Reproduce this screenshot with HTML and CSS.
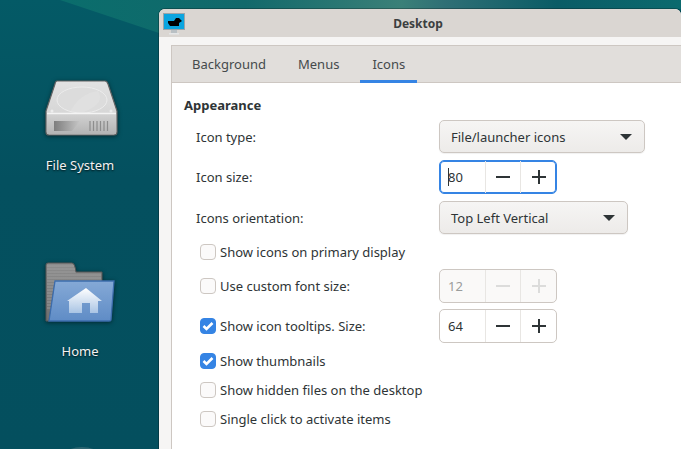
FILE: index.html
```html
<!DOCTYPE html>
<html>
  <head>
    <title>Desktop</title>
    <link rel="stylesheet" href="styles.css">
  </head>
  <body>
    <div class="desktop">
      <svg class="wallpaper" width="681" height="449" viewBox="0 0 681 449">
        <defs>
          <linearGradient id="band" x1="60" y1="0" x2="681" y2="0" gradientUnits="userSpaceOnUse">
            <stop offset="0" stop-color="#0a6d6c" />
            <stop offset="0.3" stop-color="#12696b" />
            <stop offset="0.55" stop-color="#3a8078" />
            <stop offset="0.62" stop-color="#2f6f75" />
            <stop offset="0.8" stop-color="#0a5c66" />
            <stop offset="1" stop-color="#0b6a6e" />
          </linearGradient>
        </defs>
        <polygon points="60,0 681,0 681,9 159,33" fill="url(#band)" />
        <ellipse cx="82" cy="456" rx="18" ry="9" fill="#2d6672" />
      </svg>

      <div class="desk-icon icon-fs">
        <svg width="76" height="60" viewBox="0 0 76 60">
          <defs>
            <linearGradient id="disk-top" x1="0" y1="0" x2="0" y2="1">
              <stop offset="0" stop-color="#e2e2e2" />
              <stop offset="1" stop-color="#cfcfcf" />
            </linearGradient>
            <linearGradient id="disk-front" x1="0" y1="0" x2="0" y2="1">
              <stop offset="0" stop-color="#d2d2d2" />
              <stop offset="1" stop-color="#b4b4b4" />
            </linearGradient>
            <linearGradient id="disk-slot" x1="0" y1="0" x2="1" y2="0">
              <stop offset="0" stop-color="#7d7d7d" />
              <stop offset="1" stop-color="#c6c6c6" />
            </linearGradient>
          </defs>
          <path d="M15 2 H63 Q65 2 66 5 L75 32 V53 Q75 56 72 56 H7 Q4 56 4 53 V32 L13 5 Q13.500 2 15 2 Z" fill="url(#disk-top)" stroke="#626363" stroke-width="1.200" />
          <ellipse cx="40" cy="21" rx="25" ry="13" fill="#dcdcdc" stroke="#ececec" />
          <path d="M28 33 Q38 14 56 12 Q64 24 42 33 Z" fill="#e6e6e6" opacity="0.4" />
          <circle cx="10" cy="32" r="1.500" fill="#ededed" />
          <circle cx="69" cy="32" r="1.500" fill="#ededed" />
          <rect x="5" y="35" width="69" height="20" fill="url(#disk-front)" />
          <path d="M5 34.500 H74" stroke="#f4f4f4" stroke-width="1.500" />
          <path d="M12 42 H38 L30 52 H12 Z" fill="url(#disk-slot)" />
          <path d="M48 42 V52 M51.500 42 V52 M55 42 V52 M58.500 42 V52 M62 42 V52 M65.500 42 V52" stroke="#8d8d8d" stroke-width="1.200" />
        </svg>
        <span>File System</span>
      </div>

      <div class="desk-icon icon-home">
        <svg width="76" height="62" viewBox="0 0 76 62">
          <defs>
            <linearGradient id="folder-back" x1="0" y1="0" x2="0" y2="1">
              <stop offset="0" stop-color="#8d8d8d" />
              <stop offset="1" stop-color="#6f6f6f" />
            </linearGradient>
            <linearGradient id="folder-front" x1="0" y1="0" x2="0" y2="1">
              <stop offset="0" stop-color="#85a9d6" />
              <stop offset="1" stop-color="#5f8cc6" />
            </linearGradient>
            <linearGradient id="house" x1="0" y1="0" x2="0" y2="1">
              <stop offset="0" stop-color="#ffffff" />
              <stop offset="1" stop-color="#a9c4e4" />
            </linearGradient>
          </defs>
          <path d="M4 3 Q4 1 6 1 H30 Q32 1 33 5 L34 10 H60 V20 H13 L7 59 H4 Z" fill="url(#folder-back)" stroke="#575757" />
          <path d="M5 4 H32 M5 7 H33 M5 10 H33 M5 13 H59 M5 16 H59 M5 19 H59 M5 22 H12 M5 25 H11.500 M5 28 H11 M5 31 H10.500 M5 34 H10 M5 37 H10 M5 40 H9.500 M5 43 H9 M5 46 H9" stroke="#a2a2a2" stroke-width="0.800" />
          <path d="M13 19 H72 L69 58 Q69 59 67 59 H7 Z" fill="url(#folder-front)" stroke="#3d6dad" stroke-width="1.300" />
          <path d="M44 26 L25 39 H27 V51 H40 V41 H48 V51 H56 V39 H60 Z" fill="url(#house)" />
        </svg>
        <span>Home</span>
      </div>

      <div class="window">
        <div class="titlebar">
          <svg class="app-icon" width="22" height="22" viewBox="0 0 22 22">
            <rect x="0.500" y="0.500" width="21" height="16" fill="#0aa5e0" stroke="#9aa4aa" />
            <path d="M5 8 L11 8 L13 5 L16 5 L19 8 L16 10 L16 13 L7 13 L5 10 Z" fill="#000" />
            <rect x="8" y="17" width="6" height="3" fill="#b9c0c4" />
            <rect x="6" y="20" width="10" height="1.500" fill="#e4e6e7" />
          </svg>
          <span class="title">Desktop</span>
        </div>
        <div class="body">
          <div class="notebook">
            <div class="tabs">
              <div class="tab">Background</div>
              <div class="tab">Menus</div>
              <div class="tab active">Icons</div>
            </div>
            <div class="page">
              <h4>Appearance</h4>

              <div class="row row-first">
                <label>Icon type:</label>
                <div class="combo combo-wide">File/launcher icons<i class="arrow"></i></div>
              </div>
              <div class="row">
                <label>Icon size:</label>
                <div class="spin focused">
                  <span class="value"><b class="caret"></b>80</span>
                  <span class="step"><i class="minus"></i></span>
                  <span class="step"><i class="plus"></i></span>
                </div>
              </div>
              <div class="row">
                <label>Icons orientation:</label>
                <div class="combo combo-mid">Top Left Vertical<i class="arrow"></i></div>
              </div>

              <div class="check-row check-first">
                <span class="box"></span>Show icons on primary display
              </div>
              <div class="row row-check">
                <div class="check-row"><span class="box"></span>Use custom font size:</div>
                <div class="spin disabled">
                  <span class="value">12</span>
                  <span class="step"><i class="minus"></i></span>
                  <span class="step"><i class="plus"></i></span>
                </div>
              </div>
              <div class="row row-check">
                <div class="check-row">
                  <span class="box checked"><svg width="12" height="10" viewBox="0 0 12 10"><path d="M1.500 5 L4.500 8 L10.500 2" fill="none" stroke="#fff" stroke-width="2.600" /></svg></span>Show icon tooltips. Size:
                </div>
                <div class="spin">
                  <span class="value">64</span>
                  <span class="step"><i class="minus"></i></span>
                  <span class="step"><i class="plus"></i></span>
                </div>
              </div>
              <div class="check-row">
                <span class="box checked"><svg width="12" height="10" viewBox="0 0 12 10"><path d="M1.500 5 L4.500 8 L10.500 2" fill="none" stroke="#fff" stroke-width="2.600" /></svg></span>Show thumbnails
              </div>
              <div class="check-row"><span class="box"></span>Show hidden files on the desktop</div>
              <div class="check-row"><span class="box"></span>Single click to activate items</div>
            </div>
          </div>
        </div>
      </div>
    </div>
  </body>
</html>
```

FILE: styles.css
```css
html, body {
  margin: 0;
  padding: 0;
  height: 449px;
  overflow: hidden;
}

.desktop {
  position: relative;
  width: 681px;
  height: 449px;
  overflow: hidden;
  background: linear-gradient(180deg, #045a66 0%, #04505f 40%, #044f5e 100%);
  font-family: "Noto Sans", sans-serif;
  font-size: 13px;
  color: #2e3436;
}

.wallpaper {
  position: absolute;
  left: 0;
  top: 0;
}

.desk-icon {
  position: absolute;
  left: 8px;
  width: 144px;
  display: flex;
  flex-direction: column;
  align-items: center;
  color: #f2f2f2;
  text-shadow: 0 1px 2px rgba(0, 0, 0, 0.8);
}

.desk-icon svg {
  filter: drop-shadow(0 1px 2px rgba(0, 0, 0, 0.5));
}

.icon-fs {
  top: 79px;
}

.icon-fs span {
  margin-top: 17px;
}

.icon-home {
  top: 262px;
}

.icon-home span {
  margin-top: 18px;
}

.window {
  position: absolute;
  left: 159px;
  top: 9px;
  width: 522px;
  height: 440px;
  background: #f6f5f4;
  border-radius: 6px 6px 0 0;
  box-shadow: 0 0 0 1px rgba(0, 0, 0, 0.25);
}

.titlebar {
  height: 28px;
  background: #dad6d2;
  border-radius: 6px 6px 0 0;
  display: flex;
  align-items: center;
  justify-content: center;
  position: relative;
  padding-right: 4px;
}

.app-icon {
  position: absolute;
  left: 4px;
  top: 4px;
}

.title {
  font-weight: 700;
  font-size: 12px;
  color: #3c3f40;
}

.body {
  padding: 8px 0 0 12px;
}

.notebook {
  border: 1px solid #cdc7c2;
  border-right: none;
  background: #fff;
  height: 420px;
}

.tabs {
  height: 36px;
  background: #e1dedb;
  border-bottom: 1px solid #cdc7c2;
  display: flex;
  padding-left: 8px;
  color: #454a4c;
}

.tab {
  padding: 0 12px;
  margin-right: 8px;
  line-height: 36px;
}

.tab.active {
  box-shadow: inset 0 -3px 0 #3584e4;
  height: 37px;
  margin-left: 1px;
}

.page {
  padding: 13px 0 0 12px;
}

h4 {
  margin: 0;
  font-size: 13px;
  font-weight: 700;
  line-height: 18px;
}

.row {
  display: flex;
  align-items: center;
  padding-left: 12px;
  margin-top: 7px;
}

.row label {
  width: 243px;
}

.row-first {
  margin-top: 6px;
}

.row-check {
  padding-left: 16px;
  margin-top: 6px;
}

.row-check .check-row {
  width: 239px;
  margin: 0;
  padding: 0;
}

.combo {
  box-sizing: border-box;
  height: 33px;
  padding: 0 12px 0 11px;
  display: flex;
  align-items: center;
  justify-content: space-between;
  border: 1px solid #cdc7c2;
  border-radius: 5px;
  background: linear-gradient(180deg, #f6f5f4, #edebe9);
  box-shadow: 0 1px 1px rgba(0, 0, 0, 0.06);
}

.combo-wide {
  width: 206px;
}

.combo-mid {
  width: 189px;
}

.arrow {
  width: 0;
  height: 0;
  border-left: 6px solid transparent;
  border-right: 6px solid transparent;
  border-top: 6px solid #2e3436;
}

.spin {
  box-sizing: border-box;
  width: 118px;
  height: 34px;
  display: flex;
  border: 1px solid #cdc7c2;
  border-radius: 5px;
  background: #fff;
}

.spin.focused {
  border-color: #3584e4;
  box-shadow: inset 0 0 0 1px #3584e4;
}

.value {
  flex: 1;
  display: flex;
  align-items: center;
  padding-left: 8px;
  position: relative;
}

.caret {
  position: absolute;
  left: 8px;
  top: 7px;
  width: 1px;
  height: 18px;
  background: #2e3436;
}

.step {
  width: 34px;
  border-left: 1px solid #e8e6e3;
  display: flex;
  align-items: center;
  justify-content: center;
  position: relative;
}

.step:last-child {
  width: 35px;
}

.minus, .plus {
  display: block;
  width: 14px;
  height: 2px;
  background: #2e3436;
  position: relative;
}

.plus::after {
  content: "";
  position: absolute;
  left: 6px;
  top: -6px;
  width: 2px;
  height: 14px;
  background: #2e3436;
}

.disabled {
  background: #faf9f8;
  color: #9a9c9c;
}

.disabled .minus, .disabled .plus, .disabled .plus::after {
  background: #dcdcdb;
}

.check-row {
  display: flex;
  align-items: center;
  height: 22px;
  padding-left: 16px;
  margin-top: 7px;
}

.check-first {
  margin-top: 7px;
}

.box {
  box-sizing: border-box;
  width: 16px;
  height: 16px;
  margin-right: 4px;
  border: 1px solid #cdc7c2;
  border-radius: 4px;
  background: #fbfafa;
  display: flex;
  align-items: center;
  justify-content: center;
  flex: none;
}

.box.checked {
  background: #3584e4;
  border-color: #3584e4;
}
```
